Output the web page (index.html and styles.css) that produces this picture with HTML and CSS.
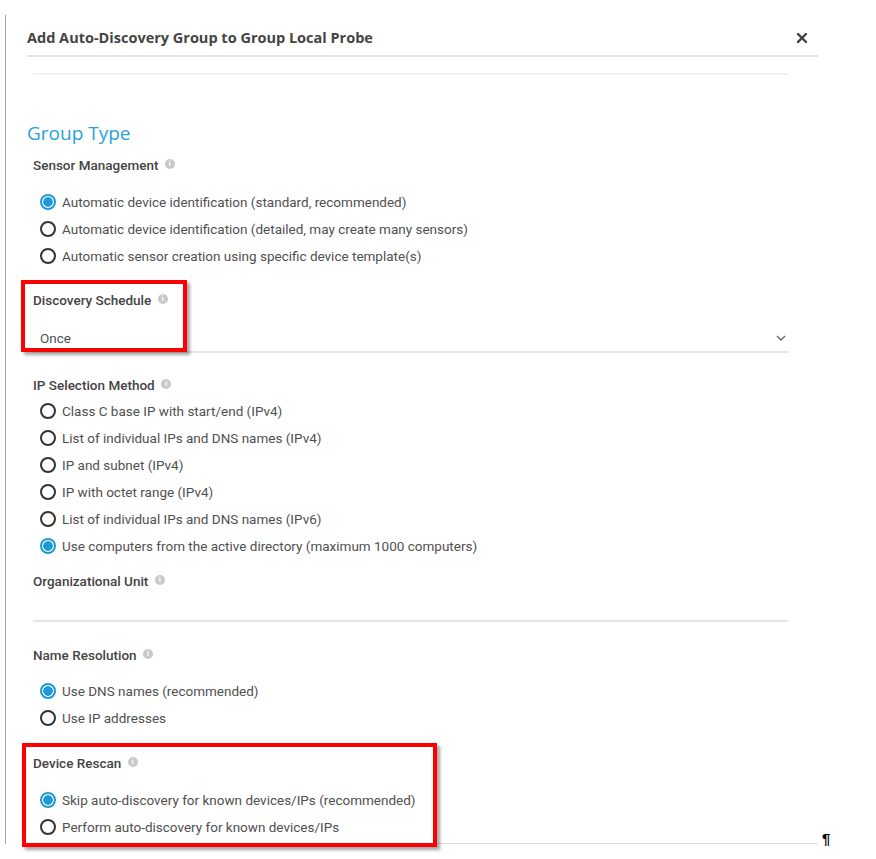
FILE: index.html
```html
<!DOCTYPE html>
<html lang="en">
<head>
    <meta charset="UTF-8">
    <meta name="viewport" content="width=device-width, initial-scale=1.0">
    <title>Add Auto-Discovery Group</title>
    <link rel="stylesheet" href="styles.css">
</head>
<body>

    <div class="page">
        <div class="sheet">
            <div class="row">
                <!-- Dialog -->
                <div class="dialog">
                    <div class="dialog-header">
                        <h3>Add Auto-Discovery Group to Group Local Probe</h3>
                        <span class="close">
                            <svg width="10" height="10" viewBox="0 0 10 10"><path d="M1 1L9 9M9 1L1 9" stroke="#444" stroke-width="2.4" stroke-linecap="square"/></svg>
                        </span>
                    </div>

                    <div class="dialog-body">
                        <div class="top-rule"></div>

                        <h2 class="group-title">Group Type</h2>

                        <div class="field">
                            <div class="label">Sensor Management <span class="info">i</span></div>
                            <div class="radios gap-l">
                                <div class="radio checked">Automatic device identification (standard, recommended)</div>
                                <div class="radio">Automatic device identification (detailed, may create many sensors)</div>
                                <div class="radio">Automatic sensor creation using specific device template(s)</div>
                            </div>
                        </div>

                        <div class="field sched">
                            <div class="label">Discovery Schedule <span class="info">i</span></div>
                            <div class="select">
                                <span>Once</span>
                                <svg width="10" height="6" viewBox="0 0 10 6"><path d="M1 1L5 5L9 1" fill="none" stroke="#666" stroke-width="1.4"/></svg>
                            </div>
                        </div>

                        <div class="field ipsel">
                            <div class="label">IP Selection Method <span class="info">i</span></div>
                            <div class="radios gap-s">
                                <div class="radio">Class C base IP with start/end (IPv4)</div>
                                <div class="radio">List of individual IPs and DNS names (IPv4)</div>
                                <div class="radio">IP and subnet (IPv4)</div>
                                <div class="radio">IP with octet range (IPv4)</div>
                                <div class="radio">List of individual IPs and DNS names (IPv6)</div>
                                <div class="radio checked">Use computers from the active directory (maximum 1000 computers)</div>
                            </div>
                        </div>

                        <div class="field orgunit">
                            <div class="label">Organizational Unit <span class="info">i</span></div>
                            <div class="text-input"></div>
                        </div>

                        <div class="field names">
                            <div class="label">Name Resolution <span class="info">i</span></div>
                            <div class="radios gap-m">
                                <div class="radio checked">Use DNS names (recommended)</div>
                                <div class="radio">Use IP addresses</div>
                            </div>
                        </div>

                        <div class="field rescan">
                            <div class="label">Device Rescan <span class="info">i</span></div>
                            <div class="radios gap-l">
                                <div class="radio checked">Skip auto-discovery for known devices/IPs (recommended)</div>
                                <div class="radio">Perform auto-discovery for known devices/IPs</div>
                            </div>
                        </div>
                    </div>
                </div>
                <span class="pilcrow">¶</span>
            </div>
        </div>

        <!-- Annotation boxes -->
        <div class="mark mark-schedule"></div>
        <div class="mark mark-rescan"></div>
    </div>

</body>
</html>
```

FILE: styles.css
```css
body {
    margin: 0;
    background: #fff;
    font-family: Roboto, "Liberation Sans", sans-serif;
    color: #555;
}

.page {
    position: relative;
    width: 876px;
    height: 859px;
    padding-top: 15px;
    box-sizing: border-box;
}

.sheet {
    margin-left: 5px;
    height: 829px;
    border-left: 1px solid #a6a6a6;
    padding-left: 21px;
}

.row {
    display: flex;
    align-items: flex-end;
}

.dialog {
    width: 791px;
    border-bottom: 1px solid #dcdcdc;
    padding-bottom: 3px;
}

.dialog-header {
    display: flex;
    justify-content: space-between;
    align-items: center;
    height: 42px;
    padding: 6px 11px 0 0;
    box-sizing: border-box;
    border-bottom: 2px solid #e3e3e3;
}

.dialog-header h3 {
    margin: 0;
    font-family: "Open Sans", sans-serif;
    font-weight: 700;
    font-size: 14.5px;
    line-height: 20px;
    color: #444;
}

.close svg {
    display: block;
}

.dialog-body {
    padding-right: 30px;
}

.top-rule {
    margin: 16px 0 0 6px;
    border-top: 2px solid #f1f1f1;
}

.group-title {
    margin: 45px 0 0;
    font-family: "Open Sans", sans-serif;
    font-weight: 400;
    font-size: 19px;
    line-height: 26px;
    color: #2a9fdb;
}

.field {
    margin-left: 6px;
    margin-top: 10px;
}

.label {
    font-size: 13.5px;
    font-weight: 500;
    line-height: 18px;
    color: #444;
}

.info {
    display: inline-block;
    width: 10px;
    height: 10px;
    margin-left: 3px;
    border-radius: 50%;
    background: #c9c9c9;
    color: #fff;
    font-size: 8px;
    font-weight: 700;
    line-height: 10px;
    text-align: center;
    vertical-align: 4px;
}

.radios {
    padding-left: 7px;
}

.gap-l { margin-top: 14px; }
.gap-m { margin-top: 13px; }
.gap-s { margin-top: 3px; }

.radio {
    display: flex;
    align-items: center;
    height: 27px;
    font-size: 13.5px;
    color: #505050;
}

.radio::before {
    content: "";
    width: 16px;
    height: 16px;
    margin-right: 6px;
    box-sizing: border-box;
    border: 2px solid #333;
    border-radius: 50%;
    flex: none;
}

.radio.checked::before {
    border-color: #1c9ad8;
    background: radial-gradient(circle, #1c9ad8 0 4.5px, #fff 5px);
}

.sched { margin-top: 22px; }

.select {
    display: flex;
    justify-content: space-between;
    align-items: center;
    margin-top: 20px;
    padding: 0 2px 4px 7px;
    font-size: 13.5px;
    line-height: 18px;
    color: #505050;
    border-bottom: 2px solid #e5e5e5;
}

.ipsel { margin-top: 23px; }

.orgunit { margin-top: 13px; }

.text-input {
    height: 30px;
    border-bottom: 2px solid #e5e5e5;
}

.names { margin-top: 24px; }

.rescan { margin-top: 23px; }

.pilcrow {
    margin: 0 0 -4px 4px;
    font-family: "Liberation Sans", sans-serif;
    font-size: 15px;
    font-weight: 700;
    color: #000;
    line-height: 18px;
}

/* red annotation frames */
.mark {
    position: absolute;
    box-sizing: border-box;
    border: 4px solid #ff0000;
    box-shadow: 3px 3px 3px rgba(0, 0, 0, 0.35);
}

.mark-schedule {
    left: 21px;
    top: 280px;
    width: 166px;
    height: 72px;
}

.mark-rescan {
    left: 22px;
    top: 743px;
    width: 415px;
    height: 104px;
}
```
